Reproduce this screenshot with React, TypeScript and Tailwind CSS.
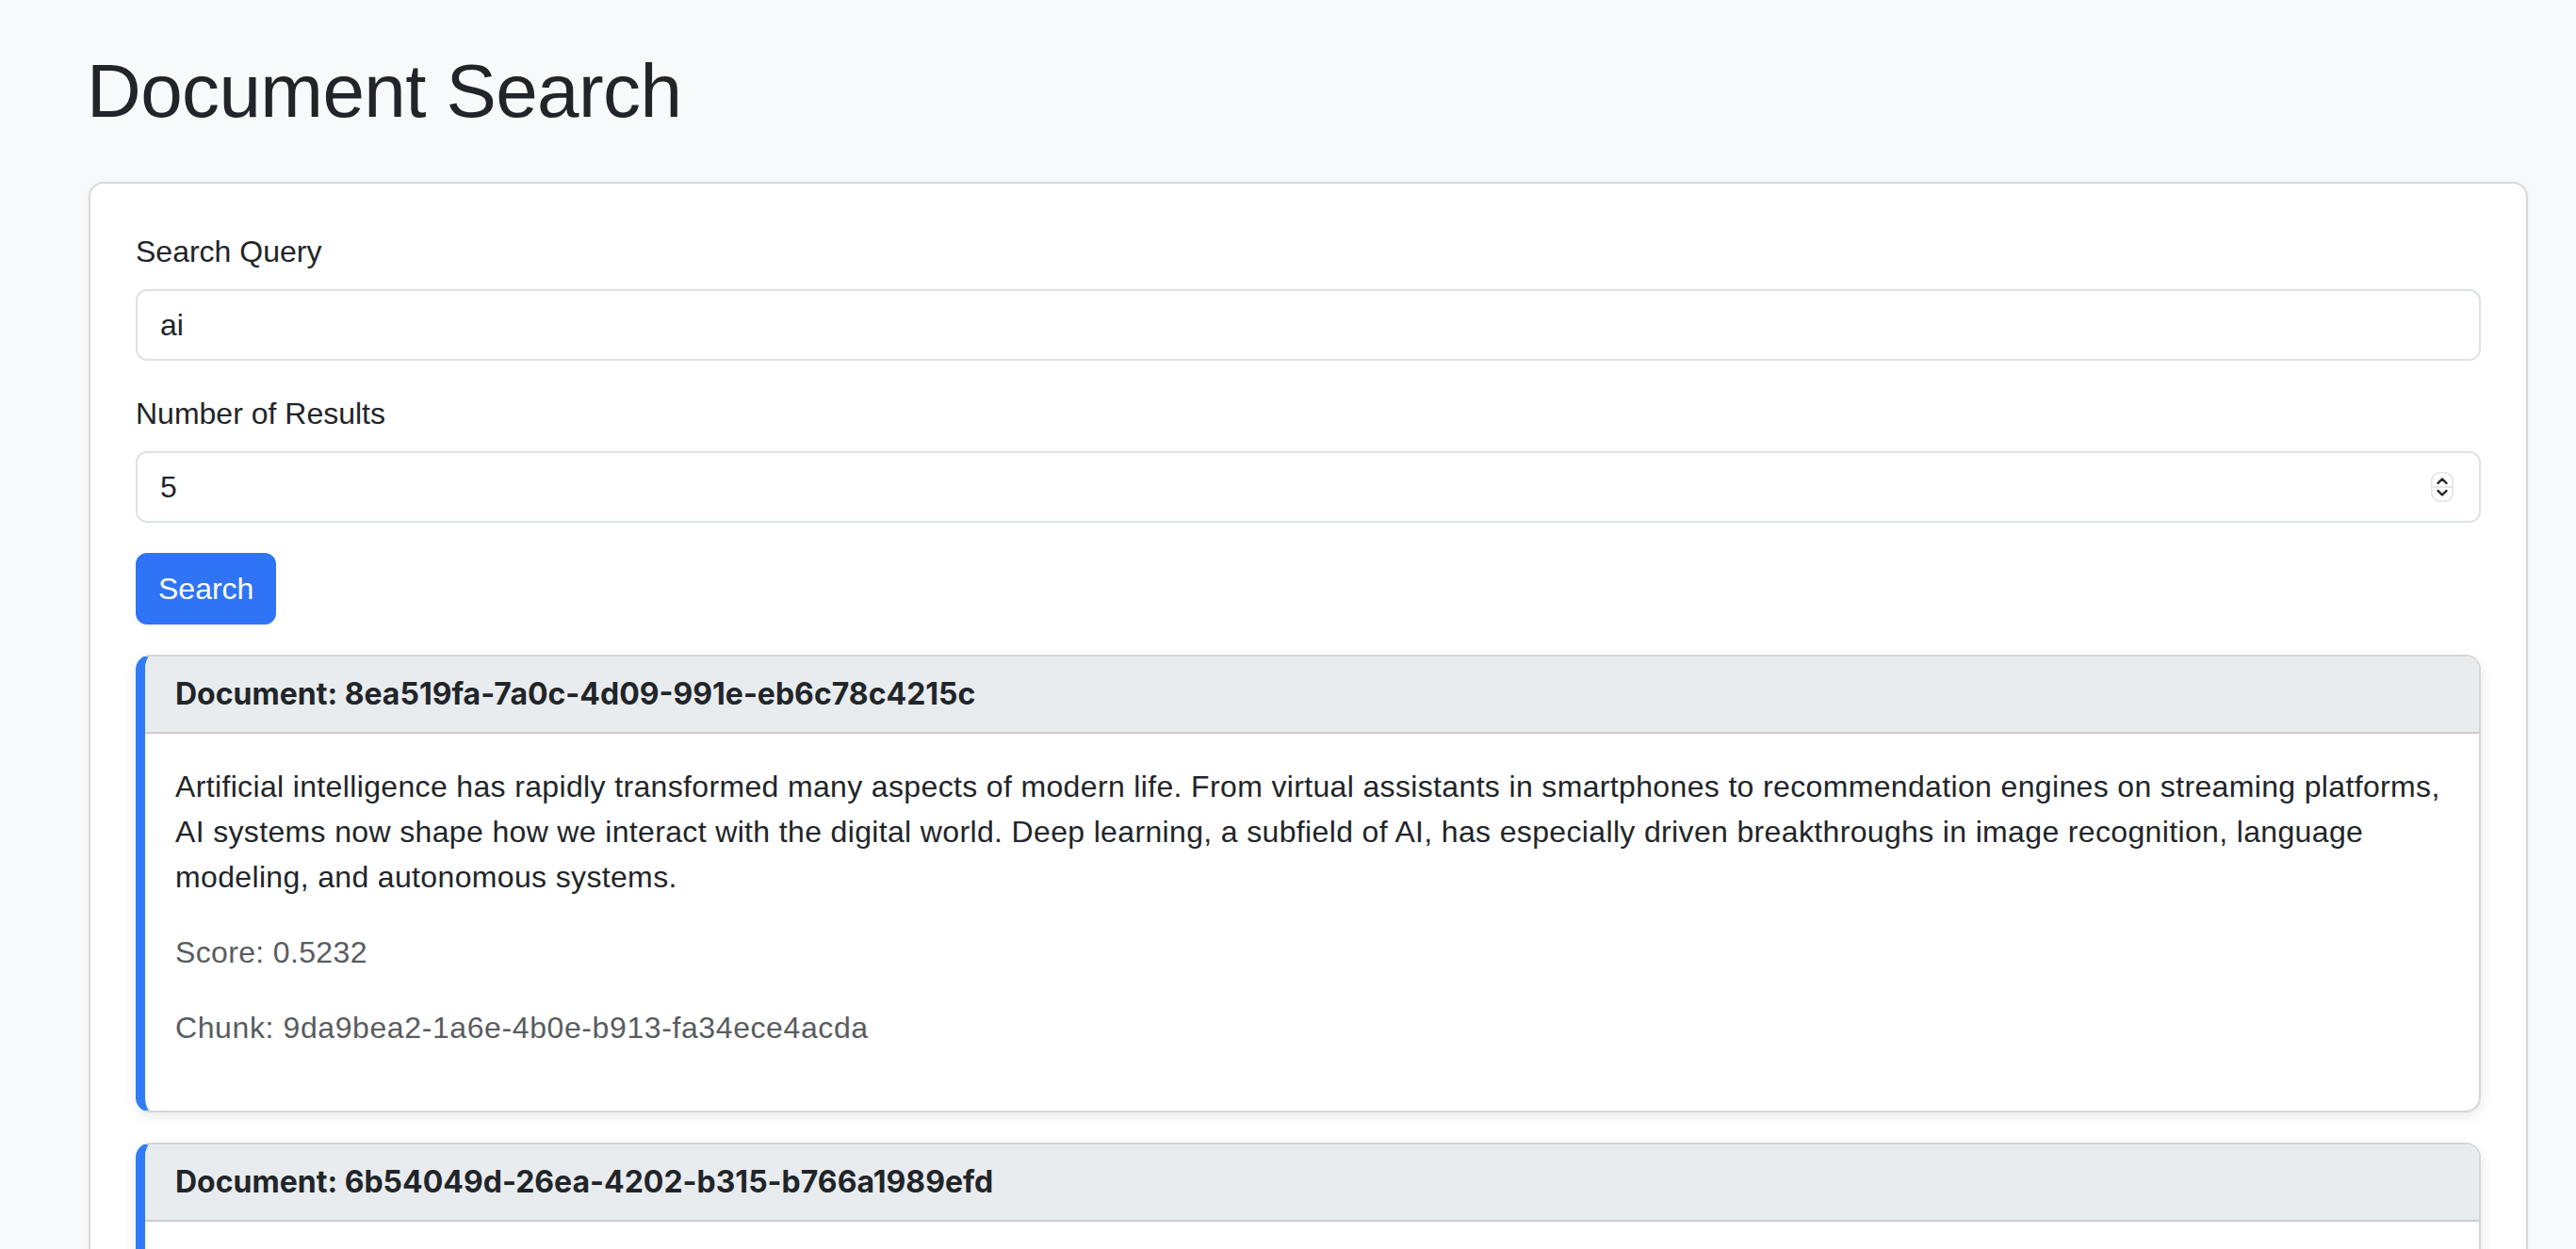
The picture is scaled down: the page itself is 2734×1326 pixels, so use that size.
import { useState } from "react";

interface SearchResult {
  documentId: string;
  text: string;
  score: number;
  chunkId: string;
}

const results: SearchResult[] = [
  {
    documentId: "8ea519fa-7a0c-4d09-991e-eb6c78c4215c",
    text: "Artificial intelligence has rapidly transformed many aspects of modern life. From virtual assistants in smartphones to recommendation engines on streaming platforms, AI systems now shape how we interact with the digital world. Deep learning, a subfield of AI, has especially driven breakthroughs in image recognition, language modeling, and autonomous systems.",
    score: 0.5232,
    chunkId: "9da9bea2-1a6e-4b0e-b913-fa34ece4acda",
  },
  {
    documentId: "6b54049d-26ea-4202-b315-b766a1989efd",
    text: "As AI becomes more capable, questions about fairness, transparency and accountability grow more pressing. Researchers and policymakers are working together to build systems that are both powerful and trustworthy.",
    score: 0.4871,
    chunkId: "3f1c8e2a-5b7d-4c9e-a1f0-2d6b8e4c7a91",
  },
];

function SpinButtons() {
  return (
    <svg width="24" height="32" viewBox="0 0 24 32" className="shrink-0" aria-hidden>
      <rect x="0.75" y="0.75" width="22.5" height="30.5" rx="9" fill="#fff" stroke="#e3e3e3" strokeWidth="1.5" />
      <line x1="1" y1="16" x2="23" y2="16" stroke="#dcdcdc" strokeWidth="1.5" />
      <path d="M7.5 12 L12 7.5 L16.5 12" fill="none" stroke="#222" strokeWidth="2.4" strokeLinecap="round" strokeLinejoin="round" />
      <path d="M7.5 20 L12 24.5 L16.5 20" fill="none" stroke="#222" strokeWidth="2.4" strokeLinecap="round" strokeLinejoin="round" />
    </svg>
  );
}

function ResultCard({ result }: { result: SearchResult }) {
  return (
    <div className="mb-[32px] overflow-hidden rounded-[16px] border-2 border-l-[10px] border-[#d4d6d9] border-l-[#2f7cf6] bg-white shadow-[0_4px_14px_rgba(0,0,0,0.09)]">
      <div className="border-b-2 border-[#c9ccd0] bg-[#e9ecef] px-[32px] py-[16px] font-['Inter',sans-serif] font-bold">
        Document: {result.documentId}
      </div>
      <div className="p-[32px] tracking-[0.35px]">
        <p className="mb-[32px]">{result.text}</p>
        <p className="mb-[32px] text-[#595c5f]">Score: {result.score.toFixed(4)}</p>
        <p className="mb-[32px] tracking-[0.6px] text-[#595c5f]">Chunk: {result.chunkId}</p>
      </div>
    </div>
  );
}

export default function App() {
  const [query, setQuery] = useState("ai");
  const [count, setCount] = useState("5");

  return (
    <div className="min-h-screen bg-[#f8f9fa] pt-[49px] pr-[51px] pl-[94px] font-['Liberation_Sans',Arial,sans-serif] text-[32px] leading-[48px] text-[#212529]">
      <h1 className="mb-[48px] -ml-[2px] text-[80px] leading-[96px] font-medium tracking-[-0.6px]">Document Search</h1>

      <div className="rounded-[16px] border-2 border-[#d8d8d8] bg-white p-[48px] shadow-[0_2px_6px_rgba(0,0,0,0.05)]">
        <div className="mb-[32px]">
          <label className="mb-[16px] block">Search Query</label>
          <div className="flex h-[76px] items-center rounded-[12px] border-2 border-[#dee2e6] bg-white px-[24px]">
            <input
              value={query}
              onChange={(e) => setQuery(e.target.value)}
              className="w-full bg-transparent outline-none"
            />
          </div>
        </div>

        <div className="mb-[32px]">
          <label className="mb-[16px] block">Number of Results</label>
          <div className="flex h-[76px] items-center gap-4 rounded-[12px] border-2 border-[#dee2e6] bg-white pr-[27px] pl-[24px]">
            <input
              value={count}
              onChange={(e) => setCount(e.target.value)}
              className="w-full bg-transparent outline-none"
            />
            <SpinButtons />
          </div>
        </div>

        <button className="h-[76px] rounded-[12px] bg-[#2f74f6] px-[24px] text-white">Search</button>

        <div className="mt-[32px]">
          {results.map((r) => (
            <ResultCard key={r.documentId} result={r} />
          ))}
        </div>
      </div>
    </div>
  );
}
